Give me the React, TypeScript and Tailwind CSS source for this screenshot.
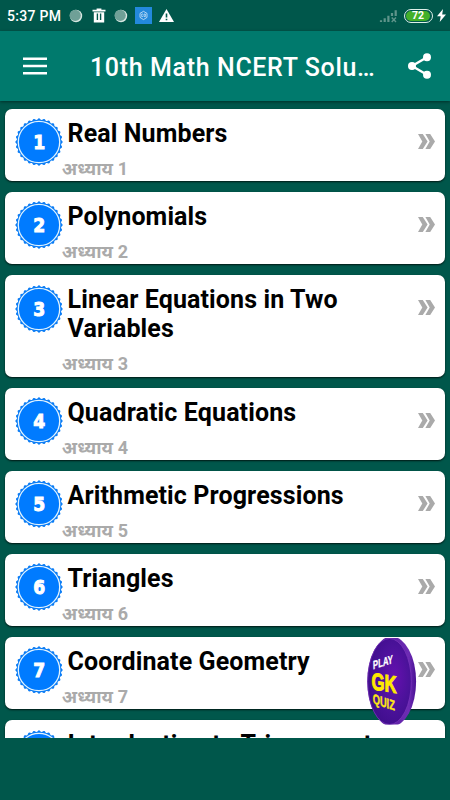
interface Chapter {
  id: number;
  title: string;
}

const chapters: Chapter[] = [
  { id: 1, title: 'Real Numbers' },
  { id: 2, title: 'Polynomials' },
  { id: 3, title: 'Linear Equations in Two Variables' },
  { id: 4, title: 'Quadratic Equations' },
  { id: 5, title: 'Arithmetic Progressions' },
  { id: 6, title: 'Triangles' },
  { id: 7, title: 'Coordinate Geometry' },
  { id: 8, title: 'Introduction to Trigonometry' },
];

// Outline of the badge: a circle whose radius swells 28 times
const scallops = Array.from({ length: 225 }, (_, i) => {
  const a = (i / 224) * Math.PI * 2;
  const r = 22.9 + 0.75 * Math.cos(a * 28);
  return `${(24 + r * Math.cos(a)).toFixed(2)},${(24 + r * Math.sin(a)).toFixed(2)}`;
}).join(' ');

function NumberBadge({ value }: { value: number }) {
  return (
    <svg className="h-12 w-12 shrink-0" viewBox="0 0 48 48">
      <polygon points={scallops} fill="#0a7cf5" />
      <circle cx="24" cy="24" r="20.7" fill="#007bff" stroke="#e2f4ff" strokeWidth="1.3" />
      <text
        transform="translate(24.3 31.2) scale(0.86 1)"
        textAnchor="middle"
        className="font-['DejaVu_Sans',sans-serif] text-[20px] font-bold"
        fill="#fff"
        stroke="#fff"
        strokeWidth="1"
      >
        {value}
      </text>
    </svg>
  );
}

function DoubleChevron() {
  return (
    <svg className="mt-[25px] h-[15px] w-[17px] shrink-0" viewBox="0 0 17 15" fill="#aaa">
      <path d="M0 0H4.8L9.6 7.5L4.8 15H0L4.3 7.5Z" />
      <path d="M7.4 0H12.2L17 7.5L12.2 15H7.4L11.7 7.5Z" />
    </svg>
  );
}

function ChapterCard({ chapter }: { chapter: Chapter }) {
  return (
    <div className="flex shrink-0 rounded-[7px] bg-white pt-[9.2px] pr-[10px] pb-[2.4px] pl-[10px] shadow-[0_1px_2px_rgba(0,0,0,0.75)]">
      <NumberBadge value={chapter.id} />
      <div className="-ml-[1.3px] flex-1">
        <h2 className="mr-4 ml-[5.8px] pt-[0.6px] text-[25px] leading-[29.3px] font-bold tracking-[0.12px] text-black">
          {chapter.title}
        </h2>
        <p className="mt-[9.7px] h-[21px] text-[18px] leading-[21px] font-bold tracking-[0.1px] text-[#aaa]">
          अध्याय {chapter.id}
        </p>
      </div>
      <div className="-mt-[9.2px]">
        <DoubleChevron />
      </div>
    </div>
  );
}

function Dot() {
  return (
    <svg className="h-[14px] w-[14px]" viewBox="0 0 14 14">
      <circle cx="7" cy="7" r="6.2" fill="#d7e6e1" />
      <circle cx="6.2" cy="6.4" r="5.6" fill="#6fa097" />
    </svg>
  );
}

function StatusBar() {
  return (
    <div className="flex h-[31px] items-center bg-[#00574b] pr-[4px] pl-[7px] text-white">
      <span className="w-[55px] pt-px text-[14px] font-medium tracking-[0.3px] whitespace-nowrap">5:37 PM</span>
      <div className="ml-[7px] flex items-center">
        <Dot />
        <svg className="ml-[9px] h-[15px] w-[14px]" viewBox="0 0 14 15" fill="#fff">
          <path d="M0.5 1.8H4.6V0.5H9.4V1.8H13.5V3.6H0.5Z" />
          <path fillRule="evenodd" d="M1.8 4.3H12.2V14.5H1.8ZM4.7 5.6V12H6.1V5.6ZM7.9 5.6V12H9.3V5.6Z" />
        </svg>
        <span className="ml-[8px] flex">
          <Dot />
        </span>
        <svg className="ml-[7px] h-[17px] w-[17px]" viewBox="0 0 17 17" fill="none" stroke="#fff">
          <path d="M0 0H17V17H0Z" fill="#2389dc" stroke="none" />
          <path d="M8.5 4.3L12 6.4V10.4L8.5 12.6L5 10.4V6.4Z" strokeWidth="0.8" opacity="0.8" />
          <path d="M8 7H6.7V9.6H8M9 7H10.4V9.6H9Z" strokeWidth="0.7" opacity="0.8" />
        </svg>
        <svg className="ml-[7px] h-[13px] w-[15px]" viewBox="0 0 15 13">
          <path d="M7.5 0L15 13H0Z" fill="#fff" />
          <path d="M6.7 4.5H8.3V8.5H6.7ZM6.7 9.7H8.3V11.2H6.7Z" fill="#00574b" />
        </svg>
      </div>
      <svg className="ml-auto h-[14px] w-[19px]" viewBox="0 0 19 14" stroke="#5f958b" fill="none">
        <path strokeWidth="2.2" d="M2 13V11.2M5.7 13V9.2M9.4 13V6.8M13 7V4M16.7 7V1.2" />
        <path strokeWidth="1.4" d="M12.7 8.6L17 12.9M17 8.6L12.7 12.9" />
      </svg>
      <div className="ml-[6px] flex h-[14px] w-[29px] items-center rounded-full border-[1.5px] border-[#dff0ea] p-px">
        <div className="flex h-full w-[24px] items-center justify-center rounded-full bg-[#43b02a] pt-px text-[10.5px] leading-none font-bold">
          72
        </div>
      </div>
      <svg className="ml-[4px] h-[13px] w-[9px]" viewBox="0 0 9 13" fill="#fff">
        <path d="M6 0L0 7.3H3.7L2.7 13L9 5.4H5.2Z" />
      </svg>
    </div>
  );
}

function AppBar() {
  return (
    <header className="relative flex h-[70px] items-center bg-[#007a6d] pt-px pr-[18px] pl-[23px] text-white shadow-[0_1px_3px_rgba(0,0,0,0.45)]">
      <svg className="mb-[2px] h-[18px] w-6" viewBox="0 0 24 18" fill="#fff">
        <path d="M0 0.5H24V3.1H0ZM0 7.7H24V10.3H0ZM0 14.9H24V17.5H0Z" />
      </svg>
      <h1 className="ml-[43px] w-[290px] pt-[3px] text-[25px] font-medium tracking-[0.64px] whitespace-nowrap">
        10th Math NCERT Solu…
      </h1>
      <svg className="mb-[2px] ml-auto h-[26px] w-6 shrink-0" viewBox="0 0 24 26" fill="#fff">
        <path d="M4 13L19 4.2M4 13L19 21.8" stroke="#fff" strokeWidth="2.4" />
        <circle cx="4" cy="13" r="4" />
        <circle cx="19" cy="4.2" r="4" />
        <circle cx="19" cy="21.8" r="4" />
      </svg>
    </header>
  );
}

function QuizButton() {
  return (
    <button className="absolute top-[637px] left-[366px]" aria-label="Play GK Quiz">
      <svg className="h-[88px] w-[52px]" viewBox="0 0 52 88">
        <defs>
          <linearGradient id="rim" x1="0" x2="1">
            <stop offset="0" stopColor="#481390" />
            <stop offset="0.85" stopColor="#6d2cb4" />
            <stop offset="1" stopColor="#491094" />
          </linearGradient>
          <radialGradient id="face" cx="0.6" cy="0.45" r="0.65">
            <stop offset="0" stopColor="#6610b0" />
            <stop offset="0.55" stopColor="#4b129a" />
            <stop offset="1" stopColor="#3d0d8a" />
          </radialGradient>
          <clipPath id="flat">
            <rect y="1" width="52" height="86.5" />
          </clipPath>
        </defs>
        <g clipPath="url(#flat)">
          <ellipse cx="25.7" cy="44.5" rx="24.4" ry="45" fill="url(#rim)" />
          <ellipse cx="23.5" cy="44.5" rx="21.8" ry="43" fill="url(#face)" stroke="#7d36bd" strokeWidth="0.7" />
        </g>
        <g className="font-['Liberation_Sans',sans-serif] font-bold" textAnchor="middle">
          <text transform="matrix(0.64 -0.2 0.02 1 17 29.3)" fontSize="12" fill="#fff" stroke="#fff" strokeWidth="0.3">
            PLAY
          </text>
          <text transform="matrix(0.7 0.11 0 1 18 54.3)" fontSize="24" fill="#ffea00" stroke="#ffea00" strokeWidth="1">
            GK
          </text>
          <text transform="matrix(0.66 0.22 0 1 17.8 70)" fontSize="14" fill="#ffe712" stroke="#ffe712" strokeWidth="0.4">
            QUIZ
          </text>
        </g>
      </svg>
    </button>
  );
}

export default function App() {
  return (
    <div className="relative h-[800px] w-[450px] overflow-hidden bg-[#00574b] font-['Roboto','Noto_Sans',sans-serif]">
      <StatusBar />
      <AppBar />
      <main className="flex h-[637px] flex-col gap-[11px] overflow-hidden px-[5px] pt-[8px]">
        {chapters.map((chapter) => (
          <ChapterCard key={chapter.id} chapter={chapter} />
        ))}
      </main>
      <QuizButton />
    </div>
  );
}
